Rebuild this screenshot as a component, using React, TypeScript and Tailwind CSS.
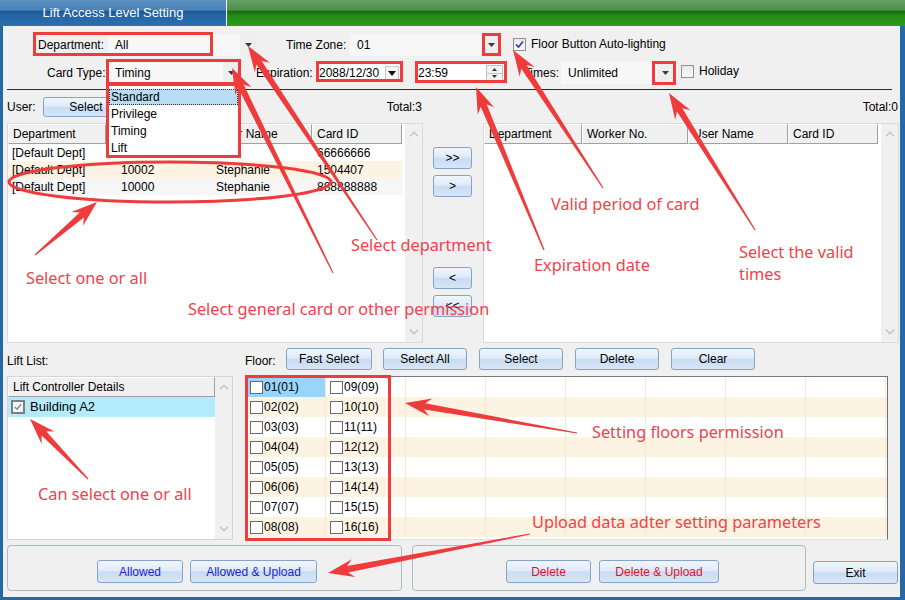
import React from "react";

const RED = "#ee3b3b";

type P = [number, number];
function arrowPoints(t: P, h: P): string {
  const [x1, y1] = t;
  const [x2, y2] = h;
  const dx = x2 - x1, dy = y2 - y1;
  const L = Math.hypot(dx, dy);
  const ux = dx / L, uy = dy / L;
  const nx = -uy, ny = ux;
  const tw = 0.6, sw = 3.2, hw = 9, join = 20, barb = 26;
  const bx = x2 - ux * join, by = y2 - uy * join;
  const cx = x2 - ux * barb, cy = y2 - uy * barb;
  const pts: P[] = [
    [x1 + nx * tw, y1 + ny * tw],
    [bx + nx * sw, by + ny * sw],
    [cx + nx * hw, cy + ny * hw],
    [x2, y2],
    [cx - nx * hw, cy - ny * hw],
    [bx - nx * sw, by - ny * sw],
    [x1 - nx * tw, y1 - ny * tw],
  ];
  return pts.map((p) => `${p[0].toFixed(1)},${p[1].toFixed(1)}`).join(" ");
}

const ARROWS: [P, P][] = [
  [[333, 273], [232, 68]],
  [[377, 240], [248, 46]],
  [[35, 255], [97, 202]],
  [[544, 250], [476, 87]],
  [[603, 188], [513, 50]],
  [[755, 230], [669, 93]],
  [[577, 433], [405, 403]],
  [[88, 479], [30, 419]],
  [[530, 534], [328, 573]],
];

function DownTri() {
  return (
    <svg width="7" height="4" viewBox="0 0 7 4">
      <path d="M0 0H7L3.5 4Z" fill="#3a3a3a" />
    </svg>
  );
}

function Chevron({ up }: { up?: boolean }) {
  return (
    <svg width="10" height="6" viewBox="0 0 10 6">
      <path
        d={up ? "M1 5.2L5 1.2L9 5.2" : "M1 0.8L5 4.8L9 0.8"}
        stroke="#c2c2c2"
        strokeWidth="1.4"
        fill="none"
      />
    </svg>
  );
}

function Btn({
  className = "",
  children,
}: {
  className?: string;
  children: React.ReactNode;
}) {
  return (
    <div
      className={`flex shrink-0 items-center justify-center rounded-[3px] border border-[#84a3cb] bg-[linear-gradient(#f1f6fd,#dfeaf8_46%,#c9dcf3_52%,#d7e6f7)] text-[12px] leading-none ${className}`}
    >
      {children}
    </div>
  );
}

function Combo({ className = "", text }: { className?: string; text: string }) {
  return (
    <div className={`flex shrink-0 items-center bg-[#f7f7f7] ${className}`}>
      <span className="flex-1 pl-[7px]">{text}</span>
      <div className="flex h-full w-[17px] items-center justify-center bg-[#eeeeee]">
        <DownTri />
      </div>
    </div>
  );
}

function Check({ checked, blue }: { checked?: boolean; blue?: boolean }) {
  return (
    <div className="flex h-[13px] w-[13px] shrink-0 items-center justify-center border border-[#8e8f8f] bg-[linear-gradient(#e8e8e8,#fafafa)]">
      {checked && (
        <svg width="9" height="9" viewBox="0 0 9 9">
          <path
            d="M1 4.5L3.5 7L8 1.5"
            stroke={blue ? "#2b3a9a" : "#7a7a7a"}
            strokeWidth="1.6"
            fill="none"
          />
        </svg>
      )}
    </div>
  );
}

function HeaderCell({ className = "", children }: { className?: string; children?: React.ReactNode }) {
  return (
    <div
      className={`flex h-[20px] shrink-0 items-center border-t border-l border-r border-b border-t-white border-l-white border-r-[#a0a0a0] border-b-[#a0a0a0] bg-[#f0f0f0] pl-[4px] ${className}`}
    >
      {children}
    </div>
  );
}

function ScrollBar({ className = "" }: { className?: string }) {
  return (
    <div className={`flex w-[17px] shrink-0 flex-col items-center justify-between bg-[#f0f0f0] py-[7px] ${className}`}>
      <Chevron up />
      <Chevron />
    </div>
  );
}

type Row = { cells: string[]; bg: string };

function UserTable({ rows }: { rows: Row[] }) {
  return (
    <div className="flex h-[220px] w-[416px] shrink-0 border border-[#dadada] bg-white">
      <div className="flex w-[397px] flex-col">
        <div className="flex">
          <HeaderCell className="w-[98px]">Department</HeaderCell>
          <HeaderCell className="w-[106px]">Worker No.</HeaderCell>
          <HeaderCell className="w-[100px]">User Name</HeaderCell>
          <HeaderCell className="w-[90px]">Card ID</HeaderCell>
        </div>
        {rows.map((r, i) => (
          <div key={i} className={`flex h-[17px] w-[394px] items-center ${r.bg}`}>
            <div className="w-[98px] pl-[4px]">{r.cells[0]}</div>
            <div className="w-[106px] pl-[15px]">{r.cells[1]}</div>
            <div className="w-[100px] pl-[4px]">{r.cells[2]}</div>
            <div className="w-[90px] pl-[5px]">{r.cells[3]}</div>
          </div>
        ))}
      </div>
      <ScrollBar />
    </div>
  );
}

const FLOORS_A = ["01(01)", "02(02)", "03(03)", "04(04)", "05(05)", "06(06)", "07(07)", "08(08)"];
const FLOORS_B = ["09(09)", "10(10)", "11(11)", "12(12)", "13(13)", "14(14)", "15(15)", "16(16)"];

function FloorCell({ label, hl }: { label?: string; hl?: boolean }) {
  return (
    <div
      className={`flex h-[20px] w-[80px] shrink-0 items-center border-r border-r-[#f1ebc9] pl-[4px] ${hl ? "bg-[#99d5f9]" : ""}`}
    >
      {label && (
        <>
          <div className="h-[13px] w-[13px] border border-[#6a6a6a] bg-white" />
          <span className="ml-[1px]">{label}</span>
        </>
      )}
    </div>
  );
}

export default function App() {
  const rows: Row[] = [
    { cells: ["[Default Dept]", "", "", "66666666"], bg: "bg-white" },
    { cells: ["[Default Dept]", "10002", "Stephanie", "1504407"], bg: "bg-[#fdf3e3]" },
    { cells: ["[Default Dept]", "10000", "Stephanie", "888888888"], bg: "bg-[#f6f6f6]" },
  ];

  return (
    <div className="relative flex h-[600px] w-[905px] flex-col overflow-hidden bg-[#f0f0f0] font-['Liberation_Sans',Arial,sans-serif] text-[12px] text-black">
      {/* Title bar */}
      <div className="flex h-[26px] shrink-0">
        <div className="flex w-[226px] items-center justify-center bg-[linear-gradient(#5b90c1,#4a83b9_38%,#1c5893_44%,#2466a6_62%,#2b70b2)] text-[13px] text-white">
          Lift Access Level Setting
        </div>
        <div className="w-px bg-[#f4f4f4]" />
        <div className="flex-1 bg-[linear-gradient(#66a264,#4e9049_38%,#1b6c12_44%,#238e14_62%,#2c9b1b)]" />
      </div>

      {/* Body */}
      <div className="flex flex-1 flex-col border-b-[3px] border-l-[3px] border-r-[5px] border-[#2668a6] pl-[4px]">
        {/* Row 1 */}
        <div className="mt-[7px] flex h-[22px] items-center pt-[1px]">
          <div className="ml-[31px] w-[70px]">Department:</div>
          <Combo className="h-[22px] w-[149px]" text="All" />
          <div className="ml-[29px] w-[64px]">Time Zone:</div>
          <Combo className="h-[22px] w-[150px]" text="01" />
          <div className="ml-[13px] flex items-center self-start pt-[1px]">
            <Check checked blue />
            <span className="ml-[5px]">Floor Button Auto-lighting</span>
          </div>
        </div>

        {/* Row 2 */}
        <div className="mt-[7px] flex h-[22px] items-center">
          <div className="ml-[40px] w-[61px]">Card Type:</div>
          <Combo className="h-[22px] w-[132px]" text="Timing" />
          <div className="ml-[16px] w-[61px]">Expiration:</div>
          <div className="flex h-[18px] w-[84px] shrink-0 items-center bg-white pl-[2px]">
            <span className="flex-1">2088/12/30</span>
            <div className="mr-[2px] flex h-[15px] w-[14px] items-center justify-center border border-[#c8c8c8] bg-[#f4f4f4]">
              <svg width="8" height="5" viewBox="0 0 8 5">
                <path d="M0 0H8L4 5Z" fill="#111" />
              </svg>
            </div>
          </div>
          <div className="ml-[15px] flex h-[19px] w-[89px] shrink-0 items-center bg-white pl-[2px]">
            <span className="flex-1">23:59</span>
            <div className="mr-[2px] flex h-[16px] w-[17px] flex-col">
              <div className="flex flex-1 items-center justify-center border border-[#c4c4c4] bg-[#f2f2f2]">
                <svg width="5" height="3" viewBox="0 0 5 3">
                  <path d="M0 3H5L2.5 0Z" fill="#333" />
                </svg>
              </div>
              <div className="flex flex-1 items-center justify-center border border-t-0 border-[#c4c4c4] bg-[#f2f2f2]">
                <svg width="5" height="3" viewBox="0 0 5 3">
                  <path d="M0 0H5L2.5 3Z" fill="#333" />
                </svg>
              </div>
            </div>
          </div>
          <div className="w-[56px] pr-[2px] text-right">Times:</div>
          <Combo className="h-[22px] w-[113px]" text="Unlimited" />
          <div className="ml-[7px] flex items-center self-start">
            <Check />
            <span className="ml-[5px]">Holiday</span>
          </div>
        </div>

        {/* Separator */}
        <div className="mt-[5px] h-px w-[885px] bg-[#2a2a2a]" />

        {/* Row 3 */}
        <div className="mt-[7px] flex h-[20px] items-center">
          <div className="flex w-[416px] items-center">
            <div className="w-[36px]">User:</div>
            <Btn className="h-[20px] w-[86px]">Select</Btn>
            <div className="flex-1 pr-[1px] text-right">Total:3</div>
          </div>
          <div className="w-[60px]" />
          <div className="w-[415px] text-right">Total:0</div>
        </div>

        {/* Tables */}
        <div className="mt-[6px] flex h-[220px]">
          <UserTable rows={rows} />
          <div className="flex w-[60px] flex-col pl-[10px] pt-[24px]">
            <Btn className="h-[22px] w-[39px] text-[10px]">&gt;&gt;</Btn>
            <Btn className="mt-[6px] h-[22px] w-[39px] text-[10px]">&gt;</Btn>
            <Btn className="mt-[70px] h-[22px] w-[39px] text-[10px]">&lt;</Btn>
            <Btn className="mt-[6px] h-[22px] w-[39px] text-[10px]">&lt;&lt;</Btn>
          </div>
          <div className="w-[415px]">
            <UserTable rows={[]} />
          </div>
        </div>

        {/* Toolbar */}
        <div className="mt-[5px] flex h-[22px] items-end">
          <div className="w-[238px]">Lift List:</div>
          <div className="w-[41px]">Floor:</div>
          <Btn className="h-[22px] w-[86px]">Fast Select</Btn>
          <Btn className="ml-[11px] h-[22px] w-[84px]">Select All</Btn>
          <Btn className="ml-[12px] h-[22px] w-[84px]">Select</Btn>
          <Btn className="ml-[12px] h-[22px] w-[84px]">Delete</Btn>
          <Btn className="ml-[12px] h-[22px] w-[84px]">Clear</Btn>
        </div>

        {/* Lists */}
        <div className="mt-[6px] flex h-[164px]">
          <div className="flex w-[226px] shrink-0 border border-[#d4d4d4] bg-white">
            <div className="flex flex-1 flex-col">
              <HeaderCell className="w-full">Lift Controller Details</HeaderCell>
              <div className="flex h-[20px] items-center bg-[#b4ebfb] pl-[3px]">
                <div className="flex h-[14px] w-[14px] items-center justify-center border-2 border-[#7f7f7f] bg-[#eef7fa]">
                  <svg width="8" height="8" viewBox="0 0 8 8">
                    <path d="M0.8 4L3 6.2L7.2 1.2" stroke="#8a8a8a" strokeWidth="1.5" fill="none" />
                  </svg>
                </div>
                <span className="ml-[5px] text-[13px]">Building A2</span>
              </div>
            </div>
            <ScrollBar />
          </div>
          <div className="ml-[12px] flex w-[643px] shrink-0 flex-col border border-t-[#7a7a7a] border-r-[#6e6e6e] border-l-[#bdbdbd] border-b-[#e0e0e0] bg-white">
            {FLOORS_A.map((a, i) => (
              <div key={i} className={`flex h-[20px] ${i % 2 === 1 ? "bg-[#fdf3e2]" : "bg-white"}`}>
                <FloorCell label={a} hl={i === 0} />
                <FloorCell label={FLOORS_B[i]} />
                <FloorCell />
                <FloorCell />
                <FloorCell />
                <FloorCell />
                <FloorCell />
                <FloorCell />
              </div>
            ))}
          </div>
        </div>

        {/* Bottom */}
        <div className="mt-[5px] flex h-[46px]">
          <div className="flex h-[46px] w-[395px] shrink-0 rounded-[4px] border border-[#a9bcc0] pl-[89px] pt-[14px]">
            <Btn className="h-[23px] w-[86px] text-[#1c1cd8]">Allowed</Btn>
            <Btn className="ml-[7px] h-[23px] w-[127px] text-[#1c1cd8]">Allowed &amp; Upload</Btn>
          </div>
          <div className="ml-[10px] flex h-[46px] w-[394px] shrink-0 rounded-[4px] border border-[#a9bcc0] pl-[93px] pt-[14px]">
            <Btn className="h-[23px] w-[85px] text-[#e0102a]">Delete</Btn>
            <Btn className="ml-[8px] h-[23px] w-[120px] text-[#e0102a]">Delete &amp; Upload</Btn>
          </div>
          <Btn className="ml-[7px] mt-[16px] h-[23px] w-[85px]">Exit</Btn>
        </div>
      </div>

      {/* Dropdown list (open menu) */}
      <div className="absolute left-[108px] top-[84px] flex h-[73px] w-[131px] flex-col bg-white pt-[5px]">
        <div className="mx-[1px] flex h-[16px] items-center border border-dotted border-[#333] bg-[#b9dcf5] pl-[1px]">Standard</div>
        <div className="flex h-[17px] items-center pl-[3px]">Privilege</div>
        <div className="flex h-[17px] items-center pl-[3px]">Timing</div>
        <div className="flex h-[17px] items-center pl-[3px]">Lift</div>
      </div>

      {/* Annotation drawing overlay */}
      <svg className="pointer-events-none absolute left-0 top-0" width="905" height="600" viewBox="0 0 905 600">
        <g fill="none" stroke={RED} strokeWidth="3">
          <rect x="34.5" y="33.5" width="177" height="21" />
          <rect x="483.5" y="34.5" width="16" height="20" />
          <rect x="107.5" y="60.5" width="132" height="23" />
          <rect x="107.5" y="84.5" width="132" height="72" />
          <rect x="317.5" y="62.5" width="84" height="18" />
          <rect x="416.5" y="62.5" width="89" height="19" />
          <rect x="653.5" y="62.5" width="21" height="21" />
          <rect x="246.5" y="376.5" width="143" height="163" />
          <ellipse cx="170" cy="182" rx="161" ry="20" />
        </g>
        <g fill={RED}>
          {ARROWS.map(([t, h], i) => (
            <polygon key={i} points={arrowPoints(t, h)} />
          ))}
        </g>
      </svg>

      {/* Annotation texts */}
      <div className="pointer-events-none font-['Noto_Sans',sans-serif] text-[16.3px] leading-none text-[#f2414b]">
        <div className="absolute left-[26px] top-[270px] whitespace-nowrap">Select one or all</div>
        <div className="absolute left-[351px] top-[237px] whitespace-nowrap">Select department</div>
        <div className="absolute left-[188px] top-[301px] whitespace-nowrap">Select general card or other permission</div>
        <div className="absolute left-[551px] top-[196px] whitespace-nowrap">Valid period of card</div>
        <div className="absolute left-[534px] top-[257px] whitespace-nowrap">Expiration date</div>
        <div className="absolute left-[739px] top-[241px] whitespace-nowrap leading-[22px]">
          Select the valid
          <br />
          times
        </div>
        <div className="absolute left-[592px] top-[424px] whitespace-nowrap">Setting floors permission</div>
        <div className="absolute left-[38px] top-[486px] whitespace-nowrap">Can select one or all</div>
        <div className="absolute left-[532px] top-[514px] whitespace-nowrap">Upload data adter setting parameters</div>
      </div>
    </div>
  );
}
